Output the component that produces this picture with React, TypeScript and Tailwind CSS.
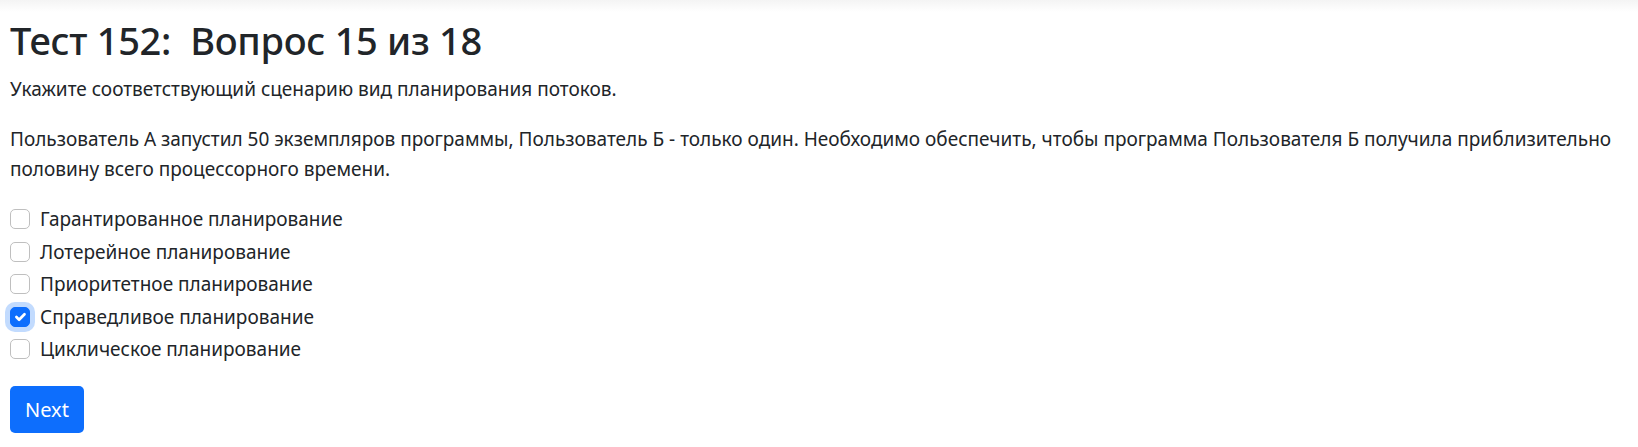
import React from "react";

const options = [
  "Гарантированное планирование",
  "Лотерейное планирование",
  "Приоритетное планирование",
  "Справедливое планирование",
  "Циклическое планирование",
];

function Check({ checked }: { checked: boolean }) {
  if (checked) {
    return (
      <span className="float-left -ml-[30px] mt-[5px] flex h-[20px] w-[20px] items-center justify-center rounded-[5px] border border-[#0d6efd] bg-[#0d6efd] shadow-[0_0_0_5px_rgba(13,110,253,0.25)]">
        <svg viewBox="0 0 20 20" className="h-[20px] w-[20px]" fill="none">
          <path d="m6 10 3 3 6-6" stroke="#fff" strokeWidth="3" strokeLinecap="round" strokeLinejoin="round" />
        </svg>
      </span>
    );
  }
  return <span className="float-left -ml-[30px] mt-[5px] block h-[20px] w-[20px] rounded-[5px] border border-[#bfbfbf] bg-white" />;
}

export default function App() {
  const [selected, setSelected] = React.useState(3);

  return (
    <div className="min-h-[447px] bg-white text-[19px] leading-[30px] text-[#212529] font-['Noto_Sans','Open_Sans',sans-serif]">
      {/* shadow of the bar above */}
      <div className="h-[12px] bg-linear-to-b from-[#f4f4f4] to-white" />
      <div className="px-[10px] pt-[4px]">
        <h2 className="mb-[10px] text-[38px] leading-[48px] font-medium tracking-[-0.3px]">Тест 152:&nbsp; Вопрос 15 из 18</h2>
        <p className="mb-[20px]">Укажите соответствующий сценарию вид планирования потоков.</p>
        <p className="mb-[20px]">
          Пользователь А запустил 50 экземпляров программы, Пользователь Б - только один. Необходимо обеспечить, чтобы
          программа Пользователя Б получила приблизительно половину всего процессорного времени.
        </p>
        <div className="mb-[22px]">
          {options.map((o, i) => (
            <label
              key={o}
              className="block min-h-[30px] mb-[2.5px] pl-[30px] cursor-pointer"
              onClick={() => setSelected(i)}
            >
              <Check checked={selected === i} />
              {o}
            </label>
          ))}
        </div>
        <button
          type="button"
          className="h-[47px] rounded-[5px] bg-[#0d6efd] px-[15px] text-[20px] leading-[30px] text-white"
        >
          Next
        </button>
      </div>
    </div>
  );
}
